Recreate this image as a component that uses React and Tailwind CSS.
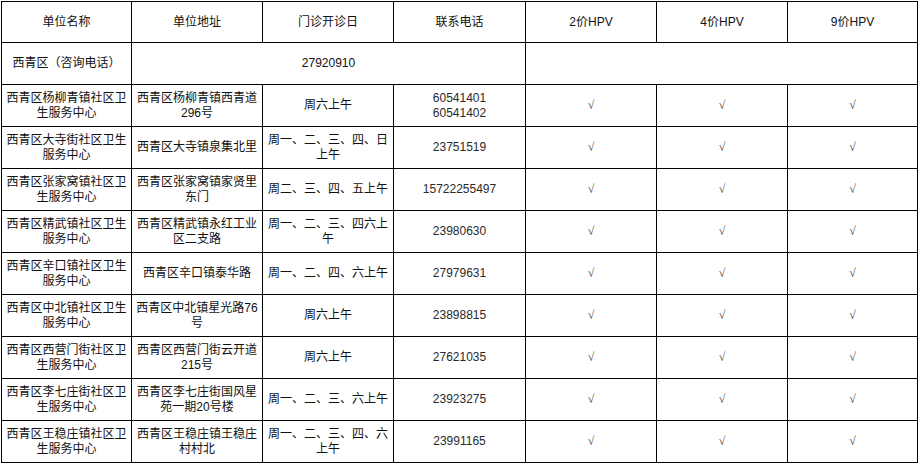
const rows = [
  { name: ["西青区杨柳青镇社区卫", "生服务中心"], addr: ["西青区杨柳青镇西青道", "296号"], days: ["周六上午"], phone: ["60541401", "60541402"] },
  { name: ["西青区大寺街社区卫生", "服务中心"], addr: ["西青区大寺镇泉集北里"], days: ["周一、二、三、四、日", "上午"], phone: ["23751519"] },
  { name: ["西青区张家窝镇社区卫", "生服务中心"], addr: ["西青区张家窝镇家贤里", "东门"], days: ["周二、三、四、五上午"], phone: ["15722255497"] },
  { name: ["西青区精武镇社区卫生", "服务中心"], addr: ["西青区精武镇永红工业", "区二支路"], days: ["周一、二、三、四六上", "午"], phone: ["23980630"] },
  { name: ["西青区辛口镇社区卫生", "服务中心"], addr: ["西青区辛口镇泰华路"], days: ["周一、二、四、六上午"], phone: ["27979631"] },
  { name: ["西青区中北镇社区卫生", "服务中心"], addr: ["西青区中北镇星光路76", "号"], days: ["周六上午"], phone: ["23898815"] },
  { name: ["西青区西营门街社区卫", "生服务中心"], addr: ["西青区西营门街云开道", "215号"], days: ["周六上午"], phone: ["27621035"] },
  { name: ["西青区李七庄街社区卫", "生服务中心"], addr: ["西青区李七庄街国风星", "苑一期20号楼"], days: ["周一、二、三、六上午"], phone: ["23923275"] },
  { name: ["西青区王稳庄镇社区卫", "生服务中心"], addr: ["西青区王稳庄镇王稳庄", "村村北"], days: ["周一、二、三、四、六", "上午"], phone: ["23991165"] },
];

function Lines({ lines }) {
  return lines.map((l, i) => (
    <div key={i} className="whitespace-nowrap">
      {l}
    </div>
  ));
}

const cell = "border border-black text-center align-middle p-0";

export default function App() {
  return (
    <div className="w-[918px] h-[463px] bg-white overflow-hidden pl-px pt-px text-[12px] leading-[15px] text-[#111] font-['Liberation_Sans','Noto_Sans_CJK_SC',sans-serif]">
      <table className="table-fixed border-collapse w-[916px]">
        <colgroup>
          <col className="w-[130px]" />
          <col className="w-[131px]" />
          <col className="w-[131px]" />
          <col className="w-[132px]" />
          <col className="w-[131px]" />
          <col className="w-[131px]" />
          <col className="w-[130px]" />
        </colgroup>
        <tbody>
          <tr className="h-[41px]">
            <td className={cell}>单位名称</td>
            <td className={cell}>单位地址</td>
            <td className={cell}>门诊开诊日</td>
            <td className={cell}>联系电话</td>
            <td className={cell}>2价HPV</td>
            <td className={cell}>4价HPV</td>
            <td className={cell}>9价HPV</td>
          </tr>
          <tr className="h-[42px]">
            <td className={cell}>西青区（咨询电话）</td>
            <td className={cell} colSpan={3}>27920910</td>
            <td className={cell} colSpan={3}></td>
          </tr>
          {rows.map((r, i) => (
            <tr key={i} className="h-[42px]">
              <td className={cell}><Lines lines={r.name} /></td>
              <td className={cell}><Lines lines={r.addr} /></td>
              <td className={cell}><Lines lines={r.days} /></td>
              <td className={cell + " text-[#2a2a2a]"}><Lines lines={r.phone} /></td>
              {[0, 1, 2].map((k) => (
                <td key={k} className={cell + " text-[#444] text-[12px] font-['Liberation_Serif',serif]"}>√</td>
              ))}
            </tr>
          ))}
        </tbody>
      </table>
    </div>
  );
}
